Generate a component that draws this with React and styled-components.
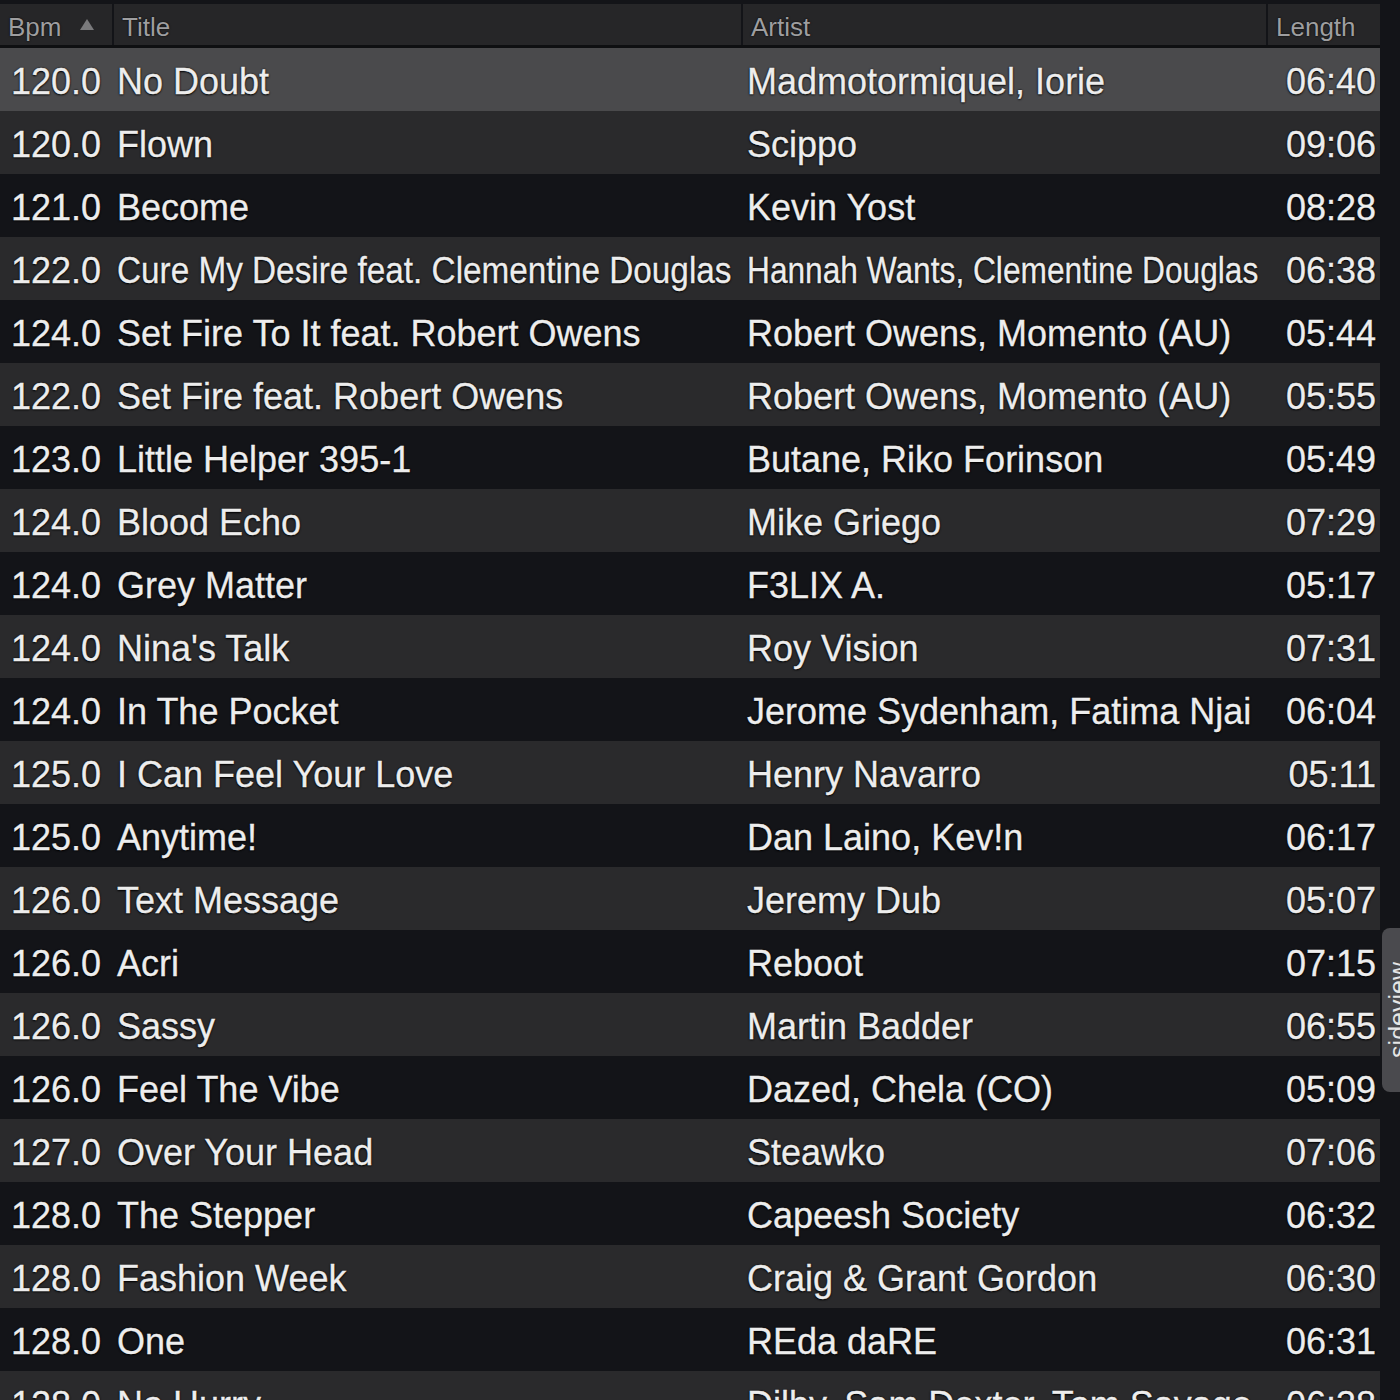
import React from 'react';
import styled, { createGlobalStyle } from 'styled-components';

const GlobalStyle = createGlobalStyle`
  html, body {
    margin: 0;
    padding: 0;
    background-color: #131418;
  }
  body {
    font-family: "Liberation Sans", Arial, sans-serif;
  }
`;

const tracks = [
  ['120.0', 'No Doubt', 'Madmotormiquel, Iorie', '06:40'],
  ['120.0', 'Flown', 'Scippo', '09:06'],
  ['121.0', 'Become', 'Kevin Yost', '08:28'],
  ['122.0', 'Cure My Desire feat. Clementine Douglas', 'Hannah Wants, Clementine Douglas', '06:38'],
  ['124.0', 'Set Fire To It feat. Robert Owens', 'Robert Owens, Momento (AU)', '05:44'],
  ['122.0', 'Set Fire feat. Robert Owens', 'Robert Owens, Momento (AU)', '05:55'],
  ['123.0', 'Little Helper 395-1', 'Butane, Riko Forinson', '05:49'],
  ['124.0', 'Blood Echo', 'Mike Griego', '07:29'],
  ['124.0', 'Grey Matter', 'F3LIX A.', '05:17'],
  ['124.0', "Nina's Talk", 'Roy Vision', '07:31'],
  ['124.0', 'In The Pocket', 'Jerome Sydenham, Fatima Njai', '06:04'],
  ['125.0', 'I Can Feel Your Love', 'Henry Navarro', '05:11'],
  ['125.0', 'Anytime!', 'Dan Laino, Kev!n', '06:17'],
  ['126.0', 'Text Message', 'Jeremy Dub', '05:07'],
  ['126.0', 'Acri', 'Reboot', '07:15'],
  ['126.0', 'Sassy', 'Martin Badder', '06:55'],
  ['126.0', 'Feel The Vibe', 'Dazed, Chela (CO)', '05:09'],
  ['127.0', 'Over Your Head', 'Steawko', '07:06'],
  ['128.0', 'The Stepper', 'Capeesh Society', '06:32'],
  ['128.0', 'Fashion Week', 'Craig & Grant Gordon', '06:30'],
  ['128.0', 'One', 'REda daRE', '06:31'],
  ['128.0', 'No Hurry', 'Dilby, Sam Dexter, Tom Savage', '06:38'],
];

const Page = styled.div`
  position: relative;
  width: 1400px;
  height: 1400px;
  overflow: hidden;
  background-color: #131418;
  padding-top: 4px;
  box-sizing: border-box;
`;

const Table = styled.div`
  width: 1380px;
`;

const columns = '112px 629px 525px 114px';

const Header = styled.div`
  display: grid;
  grid-template-columns: ${columns};
  height: 41px;
  border-bottom: 3px solid #0e0f11;
  background-color: #131418;
`;

const HeaderCell = styled.div`
  display: flex;
  align-items: center;
  justify-content: space-between;
  background-color: #262628;
  margin-left: ${(p) => (p.first ? '0' : '2px')};
  padding: 5px 18px 0 8px;
  color: #9e9ea0;
  font-size: 26px;
  text-shadow: 0 0 2px #000;
`;

const SortArrow = styled.span`
  width: 0;
  height: 0;
  border-left: 7px solid transparent;
  border-right: 7px solid transparent;
  border-bottom: 11px solid #7a7a7c;
  margin-bottom: 6px;
`;

const Row = styled.div`
  display: grid;
  grid-template-columns: ${columns};
  height: 63px;
  padding-top: 5px;
  box-sizing: border-box;
  align-items: center;
  background-color: ${(p) => (p.selected ? '#4a4a4c' : p.alt ? '#2a2a2c' : '#131418')};
  color: #ededed;
  font-size: 36px;
  -webkit-text-stroke: 0.3px #ededed;
  text-shadow: 0 0 2px #000, 0 1px 2px #000;
  white-space: nowrap;
`;

const Cell = styled.div`
  padding-left: ${(p) => p.pad || '0'};
  padding-right: ${(p) => p.padRight || '0'};
  text-align: ${(p) => (p.right ? 'right' : 'left')};
`;

const Squeeze = styled.span`
  display: inline-block;
  transform: scaleX(${(p) => p.scale});
  transform-origin: left center;
`;

const SideTab = styled.div`
  position: absolute;
  left: 1382px;
  top: 928px;
  width: 30px;
  height: 164px;
  box-sizing: border-box;
  padding-left: 4px;
  background-color: #4a4a4e;
  border-radius: 8px 0 0 8px;
  display: flex;
  align-items: center;
  overflow: hidden;
`;

const SideLabel = styled.span`
  writing-mode: vertical-rl;
  transform: rotate(180deg);
  color: #e6e6e6;
  font-size: 25px;
  line-height: 1;
  white-space: nowrap;
`;

const App = () => (
  <>
    <GlobalStyle />
    <Page>
      <Table>
        <Header>
          <HeaderCell first>
            Bpm <SortArrow />
          </HeaderCell>
          <HeaderCell>Title</HeaderCell>
          <HeaderCell>Artist</HeaderCell>
          <HeaderCell>Length</HeaderCell>
        </Header>
        {tracks.map(([bpm, title, artist, length], i) => (
          <Row key={i} selected={i === 0} alt={i % 2 === 1}>
            <Cell pad="11px">{bpm}</Cell>
            <Cell pad="5px">
              {title.length > 34 ? <Squeeze scale={0.925}>{title}</Squeeze> : title}
            </Cell>
            <Cell pad="6px">
              {artist.length > 30 ? <Squeeze scale={0.88}>{artist}</Squeeze> : artist}
            </Cell>
            <Cell right padRight="4px">{length}</Cell>
          </Row>
        ))}
      </Table>
      <SideTab>
        <SideLabel>sideview</SideLabel>
      </SideTab>
    </Page>
  </>
);

export default App;
